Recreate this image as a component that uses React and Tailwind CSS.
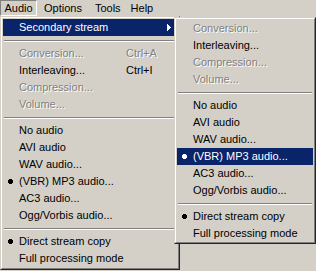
import React from 'react';

const font = { fontFamily: '"Liberation Sans", Arial, sans-serif' };

const Bullet = () => (
  <svg className="absolute left-[5px] top-[6px]" width="5" height="5" viewBox="0 0 5 5" shapeRendering="crispEdges">
    <path d="M1 0h3v1h-3z M0 1h5v3h-5z M1 4h3v1h-3z" fill="currentColor" />
  </svg>
);

const Arrow = () => (
  <svg className="absolute right-[6px] top-[5px]" width="4" height="7" viewBox="0 0 4 7" shapeRendering="crispEdges">
    <path d="M0 0h1v7h-1z M1 1h1v5h-1z M2 2h1v3h-1z M3 3h1v1h-1z" fill="currentColor" />
  </svg>
);

const Item = ({ label, shortcut, disabled, checked, active, submenu, labelWidth }) => {
  const tone = active
    ? 'bg-[#0a246a] text-white'
    : disabled
      ? 'text-[#808080] [text-shadow:1px_1px_0_#ffffff]'
      : 'text-black';
  return (
    <div className={`relative flex h-[17px] items-center whitespace-nowrap pl-[16px] ${tone}`}>
      {checked && <Bullet />}
      <span className="shrink-0" style={labelWidth ? { width: labelWidth } : undefined}>{label}</span>
      {shortcut && <span>{shortcut}</span>}
      {submenu && <Arrow />}
    </div>
  );
};

const Separator = () => (
  <div className="flex h-[9px] flex-col justify-center px-[1px]">
    <div className="h-[1px] bg-[#808080]" />
    <div className="h-[1px] bg-white" />
  </div>
);

const Frame = ({ className, children }) => (
  <div className={`absolute border border-t-[#d4d0c8] border-l-[#d4d0c8] border-b-[#0a246a] border-r-[#0a246a] bg-[#d4d0c8] ${className}`}>
    <div className="h-full border border-t-white border-l-white border-b-[#808080] border-r-[#808080] p-[1px]">
      {children}
    </div>
  </div>
);

const audioItems = (active) => [
  { label: 'No audio' },
  { label: 'AVI audio' },
  { label: 'WAV audio...' },
  { label: '(VBR) MP3 audio...', checked: true, active },
  { label: 'AC3 audio...' },
  { label: 'Ogg/Vorbis audio...' },
];

export default function App() {
  return (
    <div className="relative h-[271px] w-[316px] overflow-hidden bg-[#d4d0c8] text-[11px] leading-none" style={font}>
      {/* Menu bar */}
      <div className="flex h-[16px] items-stretch text-black">
        <div className="flex w-[37px] items-center justify-center border border-t-[#808080] border-l-[#808080] border-b-white border-r-white pt-[1px]">
          Audio
        </div>
        <div className="flex items-center px-[7px]">Options</div>
        <div className="flex items-center px-[6px]">Tools</div>
        <div className="flex items-center px-[4px]">Help</div>
      </div>

      {/* Audio menu */}
      <Frame className="left-0 top-[16px] h-[254px] w-[180px]">
        <Item label="Secondary stream" active submenu />
        <Separator />
        <Item label="Conversion..." shortcut="Ctrl+A" disabled labelWidth="107px" />
        <Item label="Interleaving..." shortcut="Ctrl+I" labelWidth="107px" />
        <Item label="Compression..." disabled />
        <Item label="Volume..." disabled />
        <Separator />
        {audioItems(false).map((it) => (
          <Item key={it.label} {...it} />
        ))}
        <Separator />
        <Item label="Direct stream copy" checked />
        <Item label="Full processing mode" />
      </Frame>

      {/* Secondary stream submenu */}
      <Frame className="left-[174px] top-[17px] h-[227px] w-[142px]">
        <Item label="Conversion..." disabled />
        <Item label="Interleaving..." />
        <Item label="Compression..." disabled />
        <Item label="Volume..." disabled />
        <Separator />
        {audioItems(true).map((it) => (
          <Item key={it.label} {...it} />
        ))}
        <Separator />
        <Item label="Direct stream copy" checked />
        <Item label="Full processing mode" />
      </Frame>
    </div>
  );
}
